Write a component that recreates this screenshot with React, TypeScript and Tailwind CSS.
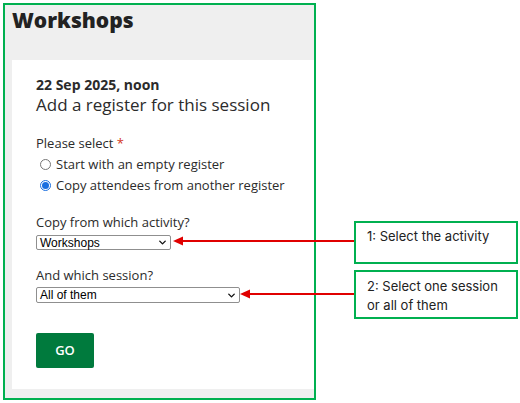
import { ChevronDown } from 'lucide-react';

const uiFont = { fontFamily: '"Open Sans", "Liberation Sans", sans-serif' };

function FakeSelect({ value, width, height }: { value: string; width: string; height: string }) {
  return (
    <div
      className={`flex items-center justify-between border border-[#8f8f8f] rounded-[2px] bg-white pl-[3px] pr-[2px] text-[12px] text-black ${width} ${height}`}
      style={{ fontFamily: '"Liberation Sans", Arial, sans-serif' }}
    >
      <span className="leading-none">{value}</span>
      <ChevronDown size={11} strokeWidth={3} className="text-[#111]" />
    </div>
  );
}

function Radio({ checked, label }: { checked: boolean; label: string }) {
  return (
    <div className="flex items-center h-[21px] text-[13px] text-[#2b2b2b]">
      <span className="w-[20px] flex justify-center ml-[-1px]">
        {checked ? (
          <span className="w-[11px] h-[11px] rounded-full border border-[#1a6fe0] bg-white flex items-center justify-center">
            <span className="w-[7px] h-[7px] rounded-full bg-[#1a6fe0]" />
          </span>
        ) : (
          <span className="w-[11px] h-[11px] rounded-full border border-[#767676] bg-white" />
        )}
      </span>
      <span className="ml-[1px]">{label}</span>
    </div>
  );
}

export default function App() {
  return (
    <div className="relative w-[520px] h-[403px] bg-white flex pt-[3px] pl-[3px]">
      <div className="w-[313px] h-[397px] border-2 border-[#00b050] bg-[#efefef] flex flex-col" style={uiFont}>
        <div className="h-[55px] pl-[7px] pt-[2px]">
          <h1 className="text-[21px] font-extrabold leading-[26px] text-[#222]">Workshops</h1>
        </div>
        <div className="flex-1 ml-[7px] mb-[9px] bg-white pl-[24px] pt-[16px] text-[#2b2b2b]">
          <p className="text-[14px] font-bold leading-[18px]">22 Sep 2025, noon</p>
          <p className="text-[17px] leading-[22px]">Add a register for this session</p>

          <p className="mt-[18px] text-[13px] leading-[18px]">
            Please select <span className="text-[#d4351c]">*</span>
          </p>
          <div className="mt-[2px]">
            <Radio checked={false} label="Start with an empty register" />
            <Radio checked={true} label="Copy attendees from another register" />
          </div>

          <p className="mt-[17px] text-[13px] leading-[18px]">Copy from which activity?</p>
          <div className="mt-[4px]">
            <FakeSelect value="Workshops" width="w-[135px]" height="h-[15px]" />
          </div>

          <p className="mt-[16px] text-[13px] leading-[18px]">And which session?</p>
          <div className="mt-[3px]">
            <FakeSelect value="All of them" width="w-[204px]" height="h-[16px]" />
          </div>

          <button className="mt-[30px] w-[58px] h-[35px] rounded-[2px] bg-[#007a3d] text-white text-[13px] font-semibold">
            GO
          </button>
        </div>
      </div>

      <div className="ml-[38px] pt-[218px] flex flex-col gap-[6px]" style={{ fontFamily: 'Inter, "Noto Sans", sans-serif' }}>
        <div className="w-[164px] h-[43px] border-2 border-[#00b050] pl-[11px] pt-[4px] text-[13px] leading-[19px] text-[#222]">
          1: Select the activity
        </div>
        <div className="w-[164px] h-[49px] border-2 border-[#00b050] pl-[11px] pt-[5px] text-[13px] leading-[19px] text-[#222]">
          2: Select one session
          <br />
          or all of them
        </div>
      </div>

      <svg className="absolute left-0 top-0 pointer-events-none" width="520" height="403">
        <line x1="354" y1="241" x2="181" y2="241" stroke="#e00000" strokeWidth="2" />
        <polygon points="173,241 183,236.5 183,245.5" fill="#e00000" />
        <line x1="354" y1="294" x2="248" y2="294" stroke="#e00000" strokeWidth="2" />
        <polygon points="240,294 250,289.5 250,298.5" fill="#e00000" />
      </svg>
    </div>
  );
}
